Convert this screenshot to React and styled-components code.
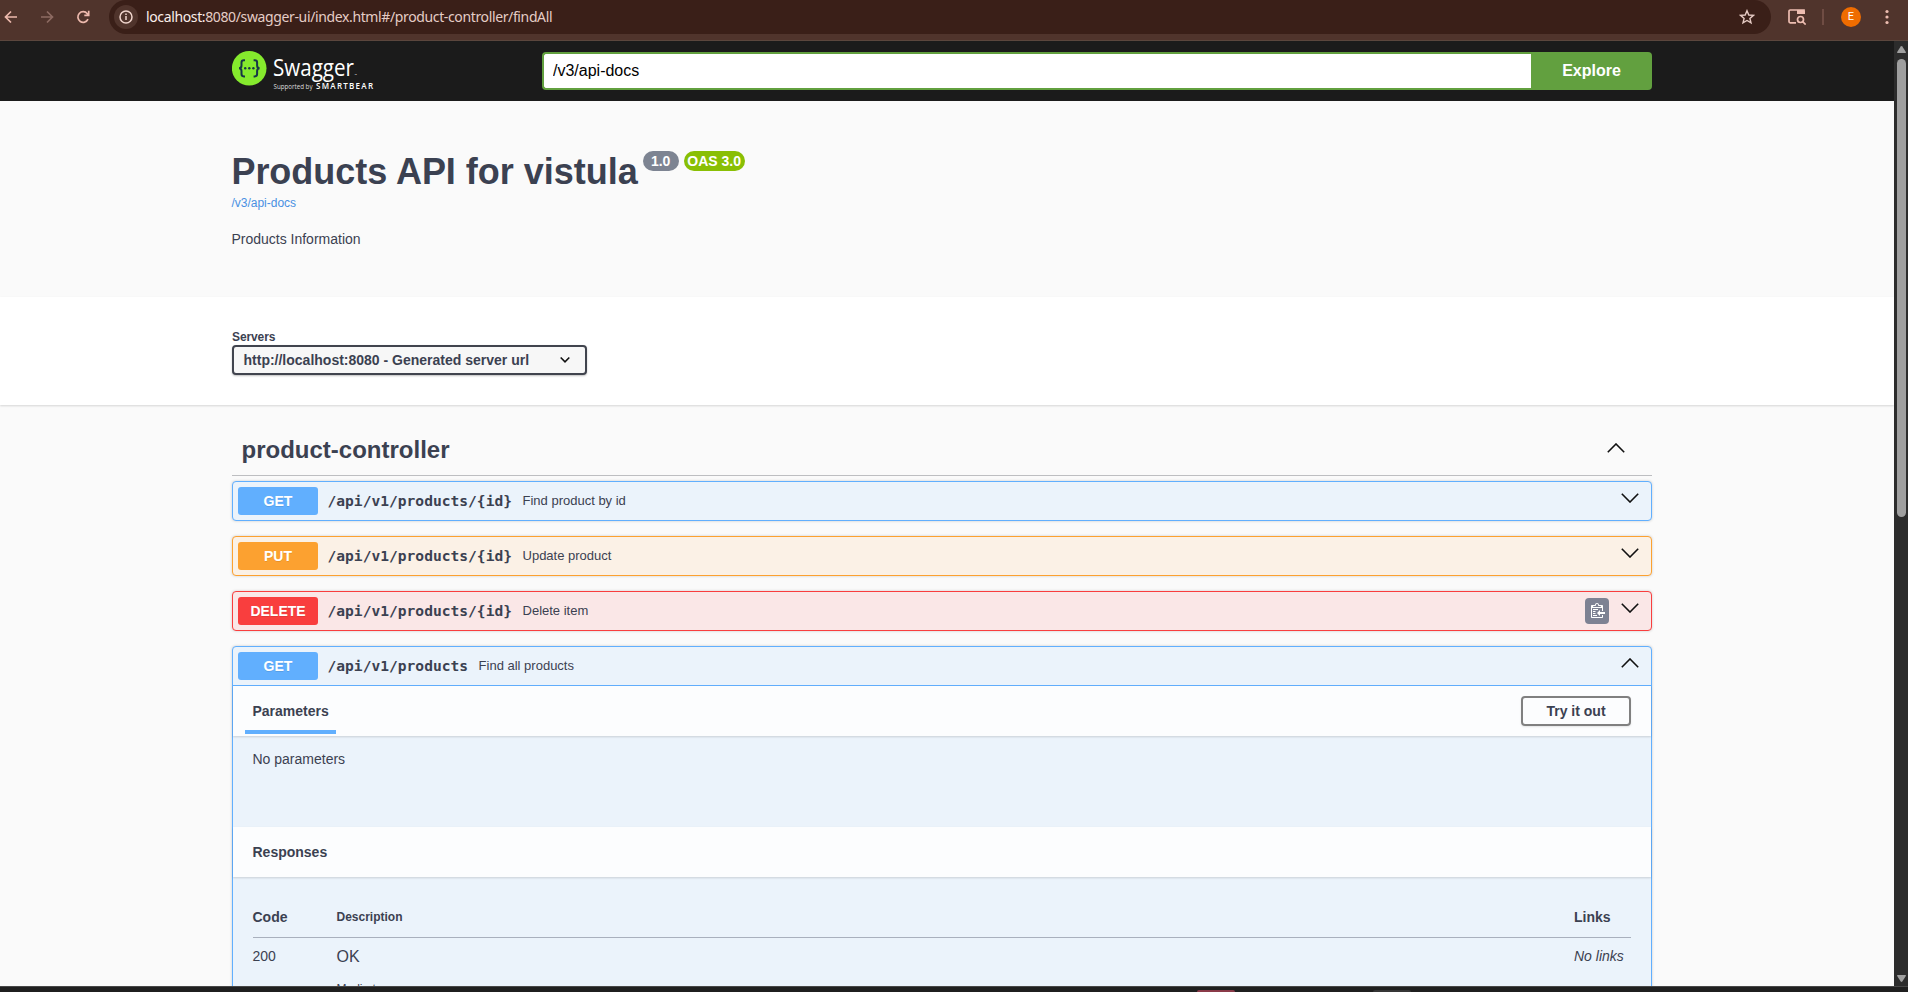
import React from "react";
import styled, { createGlobalStyle, css } from "styled-components";

const GlobalStyle = createGlobalStyle`
  *, *::before, *::after { box-sizing: border-box; }
  html, body { margin: 0; height: 100%; overflow: hidden; }
  body {
    font-family: "Liberation Sans", Arial, sans-serif;
    color: #3b4151;
    background: #fafafa;
  }
  button, input { font-family: inherit; margin: 0; }
  svg { display: block; flex: none; }
`;

const palette = {
  get: { main: "#61affe", tint: "#ebf3fb" },
  put: { main: "#fca130", tint: "#fbf1e6" },
  delete: { main: "#f93e3e", tint: "#fae7e7" },
};

const Screen = styled.div`
  width: 1908px;
  height: 992px;
  display: flex;
  flex-direction: column;
  overflow: hidden;
`;

/* Browser bar */

const BrowserBar = styled.header`
  height: 41px;
  flex: none;
  display: flex;
  align-items: flex-start;
  background: #50342c;
  border-bottom: 1px solid #5b463d;
`;

const NavIcons = styled.div`
  width: 109px;
  height: 34px;
  display: flex;
  align-items: center;
  gap: 20px;
  padding-left: 3px;
`;

const AddressBar = styled.div`
  width: 1662px;
  height: 34px;
  display: flex;
  align-items: center;
  padding: 0 16px 0 5px;
  border-radius: 17px;
  background: #3a1f18;
`;

const SiteInfo = styled.span`
  width: 24px;
  height: 24px;
  display: grid;
  place-items: center;
  border-radius: 50%;
  background: #50342c;
`;

const Url = styled.span`
  flex: 1;
  margin-left: 8px;
  font: 14px/20px "Noto Sans", "Open Sans", sans-serif;
  letter-spacing: -0.37px;
  color: #e5cdc6;
  white-space: nowrap;
`;

const UrlHost = styled.span`
  color: #fbeeea;
`;

const BrowserActions = styled.div`
  height: 34px;
  display: flex;
  align-items: center;
  padding-left: 17px;
`;

const Divider = styled.span`
  width: 2px;
  height: 16px;
  margin: 0 17px 0 16px;
  background: #6f4c43;
`;

const Avatar = styled.span`
  width: 20px;
  height: 20px;
  border-radius: 50%;
  background: #ef6c00;
  color: #fff;
  font: 11px/20px Roboto, sans-serif;
  text-align: center;
  margin-right: 24px;
`;

/* Page and scroll bar */

const Viewport = styled.div`
  height: 945px;
  flex: none;
  display: flex;
`;

const Page = styled.main`
  width: 1894px;
  height: 945px;
  overflow: hidden;
  background: #fafafa;
`;

const Scrollbar = styled.aside`
  width: 14px;
  display: flex;
  flex-direction: column;
  align-items: center;
  padding: 5px 0 4px 1px;
  background: #2c2c2c;
`;

const ScrollThumb = styled.div`
  width: 9px;
  height: 458px;
  margin: 6px 0 auto;
  border-radius: 5px;
  background: #9f9f9f;
`;

const Taskbar = styled.footer`
  height: 6px;
  display: flex;
  align-items: flex-end;
  padding-left: 1197px;
  gap: 138px;
  background: #1f1f1f;
  border-top: 1px solid #474747;
`;

const TaskHint = styled.span`
  width: 38px;
  height: 2px;
  border-radius: 3px 3px 0 0;
  background: ${(p) => p.$color};
`;

const Wrapper = styled.div`
  width: 1420px;
  margin-left: 232px;
`;

/* Top bar */

const Topbar = styled.div`
  height: 60px;
  background: #1b1b1b;
`;

const TopbarInner = styled(Wrapper)`
  height: 60px;
  display: flex;
  align-items: flex-start;
`;

const LogoLink = styled.div`
  width: 310px;
  padding-top: 8px;
`;

const SpecForm = styled.div`
  display: flex;
  padding-top: 11px;
`;

const SpecInput = styled.input`
  width: 989px;
  height: 38px;
  padding: 0 9px;
  border: 2px solid #62a03f;
  border-right: 0;
  border-radius: 4px 0 0 4px;
  outline: none;
  background: #fff;
  color: #000;
  font-size: 16px;
`;

const ExploreButton = styled.button`
  width: 121px;
  height: 38px;
  padding: 0;
  border: 0;
  border-radius: 0 4px 4px 0;
  background: #62a03f;
  color: #fff;
  font-size: 16px;
  font-weight: 700;
`;

/* API information */

const Info = styled.section`
  height: 196px;
  padding-top: 50px;
`;

const InfoBody = styled(Wrapper)`
  margin-left: 231.4px;
`;

const TitleRow = styled.div`
  height: 42px;
  display: flex;
  align-items: flex-start;
`;

const Title = styled.h1`
  margin: 0 5px 0 0;
  font-size: 36px;
  line-height: 42px;
  letter-spacing: -0.02px;
  white-space: nowrap;
`;

const Version = styled.span`
  width: ${(p) => p.$width}px;
  height: 20px;
  margin-right: 5px;
  border-radius: 10px;
  background: ${(p) => p.$color};
  color: #fff;
  font-size: 14px;
  font-weight: 700;
  line-height: 20px;
  text-align: center;
  white-space: nowrap;
`;

const DocsLink = styled.a`
  display: block;
  margin-top: 2px;
  color: #4990e2;
  font-size: 12px;
  line-height: 16px;
`;

const InfoText = styled.p`
  margin: 18px 0 0;
  font-size: 14px;
  line-height: 20px;
`;

/* Servers */

const Servers = styled.section`
  position: relative;
  height: 108px;
  padding-top: 32px;
  background: #fff;
  box-shadow: 0 1px 2px rgba(0, 0, 0, 0.15);
`;

const ServersLabel = styled.div`
  height: 16px;
  font-size: 12px;
  font-weight: 700;
  line-height: 16px;
  letter-spacing: -0.1px;
`;

const Select = styled.div`
  width: 355px;
  height: 30px;
  display: flex;
  align-items: center;
  justify-content: space-between;
  padding: 0 14px 0 9.500px;
  border: 2px solid #41444e;
  border-radius: 4px;
  background: #f7f7f7;
  box-shadow: 0 1px 2px rgba(0, 0, 0, 0.25);
  font-size: 14px;
  font-weight: 700;
  white-space: nowrap;
`;

/* Operations */

const TagHeader = styled.div`
  height: 71px;
  display: flex;
  align-items: flex-start;
  justify-content: space-between;
  padding: 30px 27px 0 9.500px;
  border-bottom: 1px solid #bdbec1;
`;

const TagName = styled.h3`
  margin: 1px 0 0;
  font-size: 24px;
  line-height: 28px;
`;

const TagArrow = styled.span`
  padding-top: 8px;
`;

const OperationList = styled.div`
  display: flex;
  flex-direction: column;
  gap: 15px;
  padding-top: 5px;
`;

const Operation = styled.article`
  border: 1px solid ${(p) => palette[p.$kind].main};
  border-radius: 4px;
  background: ${(p) => palette[p.$kind].tint};
  box-shadow: 0 0 3px rgba(0, 0, 0, 0.19);
`;

const Summary = styled.div`
  height: 38px;
  display: flex;
  align-items: center;
  padding: 0 12px 0 5px;
  ${(p) =>
    p.$open &&
    css`
      height: 39px;
      border-bottom: 1px solid ${palette.get.main};
    `}
`;

const Method = styled.span`
  width: 80px;
  height: 28px;
  border-radius: 3px;
  background: ${(p) => palette[p.$kind].main};
  color: #fff;
  font-size: 14px;
  font-weight: 700;
  line-height: 28px;
  text-align: center;
  text-shadow: 0 1px 0 rgba(0, 0, 0, 0.1);
`;

const Path = styled.span`
  margin-left: 9.500px;
  font: 700 14.6px/20px "DejaVu Sans Mono", monospace;
  white-space: nowrap;
`;

const Description = styled.span`
  flex: 1;
  margin-left: 10.500px;
  font-size: 13px;
  line-height: 18px;
`;

const CopyButton = styled.span`
  width: 24px;
  height: 26px;
  display: grid;
  place-items: center;
  margin: 0 12px 0 0;
  border-radius: 4px;
  background: #7d8293;
`;

const ArrowSlot = styled.span`
  padding-bottom: 6px;
`;

const SectionHeader = styled.div`
  position: relative;
  height: 50px;
  display: flex;
  align-items: center;
  justify-content: space-between;
  padding: 0 20px 0 19.500px;
  background: #fcfdfe;
  box-shadow: 0 1px 2px rgba(0, 0, 0, 0.15);
`;

const Tab = styled.h4`
  height: 48px;
  margin: -2px 0 0 -7.500px;
  padding: 15px 7.500px 0;
  border-bottom: 4px solid #61affe;
  font-size: 14px;
  line-height: 20px;
`;

const SectionTitle = styled.h4`
  margin: 0;
  font-size: 14px;
  line-height: 20px;
`;

const TryButton = styled.button`
  width: 110px;
  height: 30px;
  padding: 0;
  border: 2px solid #808080;
  border-radius: 4px;
  background: transparent;
  box-shadow: 0 1px 2px rgba(0, 0, 0, 0.1);
  color: #3b4151;
  font-size: 14px;
  font-weight: 700;
`;

const NoParameters = styled.div`
  height: 91px;
  padding: 13px 19.500px 0;
  font-size: 14px;
  line-height: 20px;
`;

const Responses = styled.div`
  height: 180px;
  padding: 30px 20px 0 19.500px;
`;

const Row = styled.div`
  display: grid;
  grid-template-columns: 84px 1237.5px 1fr;
  font-size: 14px;
  line-height: 20px;
`;

const HeadRow = styled(Row)`
  height: 31px;
  font-weight: 700;
  border-bottom: 1px solid #a9b0bd;
`;

const BodyRow = styled(Row)`
  padding-top: 8px;
`;

const SmallHead = styled.span`
  font-size: 12px;
`;

const ResponseText = styled.div`
  font-size: 16px;
  line-height: 21px;
`;

const MediaLabel = styled.div`
  margin-top: 13px;
  font-size: 12px;
  line-height: 18px;
`;

const NoLinks = styled.i`
  white-space: nowrap;
`;

/* Drawings */

const NavIcon = ({ d, color, size = 16 }) => (
  <svg width={size} height={size} viewBox="0 0 16 16" fill="none" stroke={color} strokeWidth="1.7">
    <path d={d} />
  </svg>
);

const Chevron = ({ up }) => (
  <svg width="18" height="10" viewBox="0 0 18 10" fill="none" stroke="#111" strokeWidth="1.6">
    <path d={up ? "M.8 9.2 9 1 17.200 9.200" : "M.8.8 9 9 17.200.8"} />
  </svg>
);

const InfoIcon = () => (
  <svg width="14" height="14" viewBox="0 0 14 14" fill="none" stroke="#f0d5cd" strokeWidth="1.5">
    <circle cx="7" cy="7" r="6" />
    <path d="M7 6v4M7 3.500v1.600" />
  </svg>
);

const StarIcon = () => (
  <svg width="16" height="16" viewBox="0 0 16 16" fill="none" stroke="#e6cbc4" strokeWidth="1.4">
    <path d="M8 1.700 9.800 6l4.600.4-3.500 3 1.100 4.500L8 11.500l-4 2.400 1.100-4.500-3.500-3L6.200 6Z" />
  </svg>
);

const TabSearchIcon = () => (
  <svg width="18" height="16" viewBox="0 0 18 16" fill="none" stroke="#edbdb1" strokeWidth="1.7">
    <path d="M8 13.800H2.200a1.200 1.200 0 0 1-1.200-1.200V2.200A1.200 1.200 0 0 1 2.200 1H16v4" />
    <path d="M9 1h6.500a1.500 1.500 0 0 1 1.500 1.500V5H9Z" fill="#edbdb1" stroke="none" />
    <circle cx="12.500" cy="10.500" r="3" />
    <path d="m14.700 12.700 3 2.900" />
  </svg>
);

const MenuIcon = () => (
  <svg width="4" height="16" viewBox="0 0 4 16" fill="#edbdb1">
    <circle cx="2" cy="2.500" r="1.600" />
    <circle cx="2" cy="8" r="1.600" />
    <circle cx="2" cy="13.500" r="1.600" />
  </svg>
);

const ClipboardIcon = () => (
  <svg width="16" height="18" viewBox="-2 0 16 18">
    <path
      fill="#fff"
      fillRule="evenodd"
      d="M2 13h4v1H2v-1zm5-6H2v1h5V7zm2 3V8l-3 3 3 3v-2h5v-2H9zM4.500 9H2v1h2.500V9zM2 12h2.500v-1H2v1zm9 1h1v2c-.02.28-.11.52-.3.700-.19.180-.42.280-.7.300H1c-.55 0-1-.45-1-1V4c0-.55.45-1 1-1h3c0-1.110.89-2 2-2 1.110 0 2 .89 2 2h3c.55 0 1 .45 1 1v5h-1V6H1v9h10v-2zM2 5h8c0-.55-.45-1-1-1H8c-.55 0-1-.45-1-1s-.45-1-1-1-1 .45-1 1-.45 1-1 1H3c-.55 0-1 .45-1 1z"
    />
  </svg>
);

const SelectArrow = () => (
  <svg width="12" height="8" viewBox="0 0 12 8" fill="none" stroke="#111" strokeWidth="1.6">
    <path d="M1.700 1.500 6 5.800l4.300-4.300" />
  </svg>
);

const ScrollArrow = ({ down }) => (
  <svg width="9" height="7" viewBox="0 0 9 7" fill="#9f9f9f">
    <path d={down ? "M0 .8Q0 0 .8 0h7.400Q9 0 9 .8L5.300 6.500Q4.500 7.400 3.700 6.500Z" : "M0 6.200Q0 7 .8 7h7.400Q9 7 9 6.200L5.300.5Q4.500-.4 3.700.5Z"} />
  </svg>
);

const Logo = () => (
  <svg width="146" height="46" viewBox="0 0 146 46">
    <circle cx="17.200" cy="19.300" r="17.300" fill="#85ea2d" />
    <g fill="none" stroke="#173647" strokeWidth="2">
      <path d="M13 11.200h-1.200q-2.300 0-2.300 2.300v3q0 2.800-2.500 2.800 2.500 0 2.500 2.800v3q0 2.300 2.300 2.300H13" />
      <path d="M21.600 11.200h1.200q2.300 0 2.300 2.300v3q0 2.800 2.500 2.800-2.500 0-2.500 2.800v3q0 2.300-2.300 2.300h-1.200" />
    </g>
    <g fill="#173647">
      <circle cx="13.200" cy="19.300" r="1.200" />
      <circle cx="17.300" cy="19.300" r="1.200" />
      <circle cx="21.400" cy="19.300" r="1.200" />
    </g>
    <g fill="#fff" fontFamily="'Open Sans', 'Noto Sans', sans-serif">
      <text x="41" y="27" fontSize="23" fontWeight="400" textLength="81" lengthAdjust="spacingAndGlyphs">
        Swagger
      </text>
      <text x="122.500" y="26.500" fontSize="3">
        ™
      </text>
      <text x="41.500" y="40" fontSize="6.300" textLength="39" lengthAdjust="spacingAndGlyphs" fill="#ddd">
        Supported by
      </text>
      <text x="84" y="40" fontSize="8" fontWeight="600" textLength="57">
        SMARTBEAR
      </text>
    </g>
  </svg>
);

const collapsed = [
  { kind: "get", path: "/api/v1/products/{id}", text: "Find product by id" },
  { kind: "put", path: "/api/v1/products/{id}", text: "Update product" },
  { kind: "delete", path: "/api/v1/products/{id}", text: "Delete item", copy: true },
];

const SummaryLine = ({ kind, path, text, copy, open }) => (
  <Summary $open={open}>
    <Method $kind={kind}>{kind.toUpperCase()}</Method>
    <Path>{path}</Path>
    <Description>{text}</Description>
    {copy && (
      <CopyButton>
        <ClipboardIcon />
      </CopyButton>
    )}
    <ArrowSlot>
      <Chevron up={open} />
    </ArrowSlot>
  </Summary>
);

export default function App() {
  return (
    <Screen>
      <GlobalStyle />
      <BrowserBar>
        <NavIcons>
          <NavIcon color="#edb9ad" d="M14 8H3M8 2.500 2.500 8 8 13.500" />
          <NavIcon color="#8d6b62" d="M2 8h11M8 2.500 13.500 8 8 13.500" />
          <NavIcon color="#edb9ad" d="M13 10.200A5.300 5.300 0 1 1 12.300 4.700L13.600 6M13.700 1.800v4.500H9.300" />
        </NavIcons>
        <AddressBar>
          <SiteInfo>
            <InfoIcon />
          </SiteInfo>
          <Url>
            <UrlHost>localhost:</UrlHost>8080/swagger-ui/index.html#/product-controller/findAll
          </Url>
          <StarIcon />
        </AddressBar>
        <BrowserActions>
          <TabSearchIcon />
          <Divider />
          <Avatar>E</Avatar>
          <MenuIcon />
        </BrowserActions>
      </BrowserBar>

      <Viewport>
        <Page>
          <Topbar>
            <TopbarInner>
              <LogoLink>
                <Logo />
              </LogoLink>
              <SpecForm>
                <SpecInput defaultValue="/v3/api-docs" />
                <ExploreButton>Explore</ExploreButton>
              </SpecForm>
            </TopbarInner>
          </Topbar>

          <Info>
            <InfoBody>
              <TitleRow>
                <Title>Products API for vistula</Title>
                <Version $width={36} $color="#7d8492">1.0</Version>
                <Version $width={61} $color="#89bf04">OAS 3.0</Version>
              </TitleRow>
              <DocsLink>/v3/api-docs</DocsLink>
              <InfoText>Products Information</InfoText>
            </InfoBody>
          </Info>

          <Servers>
            <Wrapper>
              <ServersLabel>Servers</ServersLabel>
              <Select>
                http://localhost:8080 - Generated server url
                <SelectArrow />
              </Select>
            </Wrapper>
          </Servers>

          <Wrapper>
            <TagHeader>
              <TagName>product-controller</TagName>
              <TagArrow>
                <Chevron up />
              </TagArrow>
            </TagHeader>
            <OperationList>
              {collapsed.map((op) => (
                <Operation key={op.kind} $kind={op.kind}>
                  <SummaryLine {...op} />
                </Operation>
              ))}
              <Operation $kind="get">
                <SummaryLine kind="get" path="/api/v1/products" text="Find all products" open />
                <SectionHeader>
                  <Tab>Parameters</Tab>
                  <TryButton>Try it out</TryButton>
                </SectionHeader>
                <NoParameters>No parameters</NoParameters>
                <SectionHeader>
                  <SectionTitle>Responses</SectionTitle>
                </SectionHeader>
                <Responses>
                  <HeadRow>
                    <span>Code</span>
                    <SmallHead>Description</SmallHead>
                    <span>Links</span>
                  </HeadRow>
                  <BodyRow>
                    <span>200</span>
                    <div>
                      <ResponseText>OK</ResponseText>
                      <MediaLabel>Media type</MediaLabel>
                    </div>
                    <NoLinks>No links</NoLinks>
                  </BodyRow>
                </Responses>
              </Operation>
            </OperationList>
          </Wrapper>
        </Page>
        <Scrollbar>
          <ScrollArrow />
          <ScrollThumb />
          <ScrollArrow down />
        </Scrollbar>
      </Viewport>

      <Taskbar>
        <TaskHint $color="#8a3a48" />
        <TaskHint $color="#363636" />
      </Taskbar>
    </Screen>
  );
}
